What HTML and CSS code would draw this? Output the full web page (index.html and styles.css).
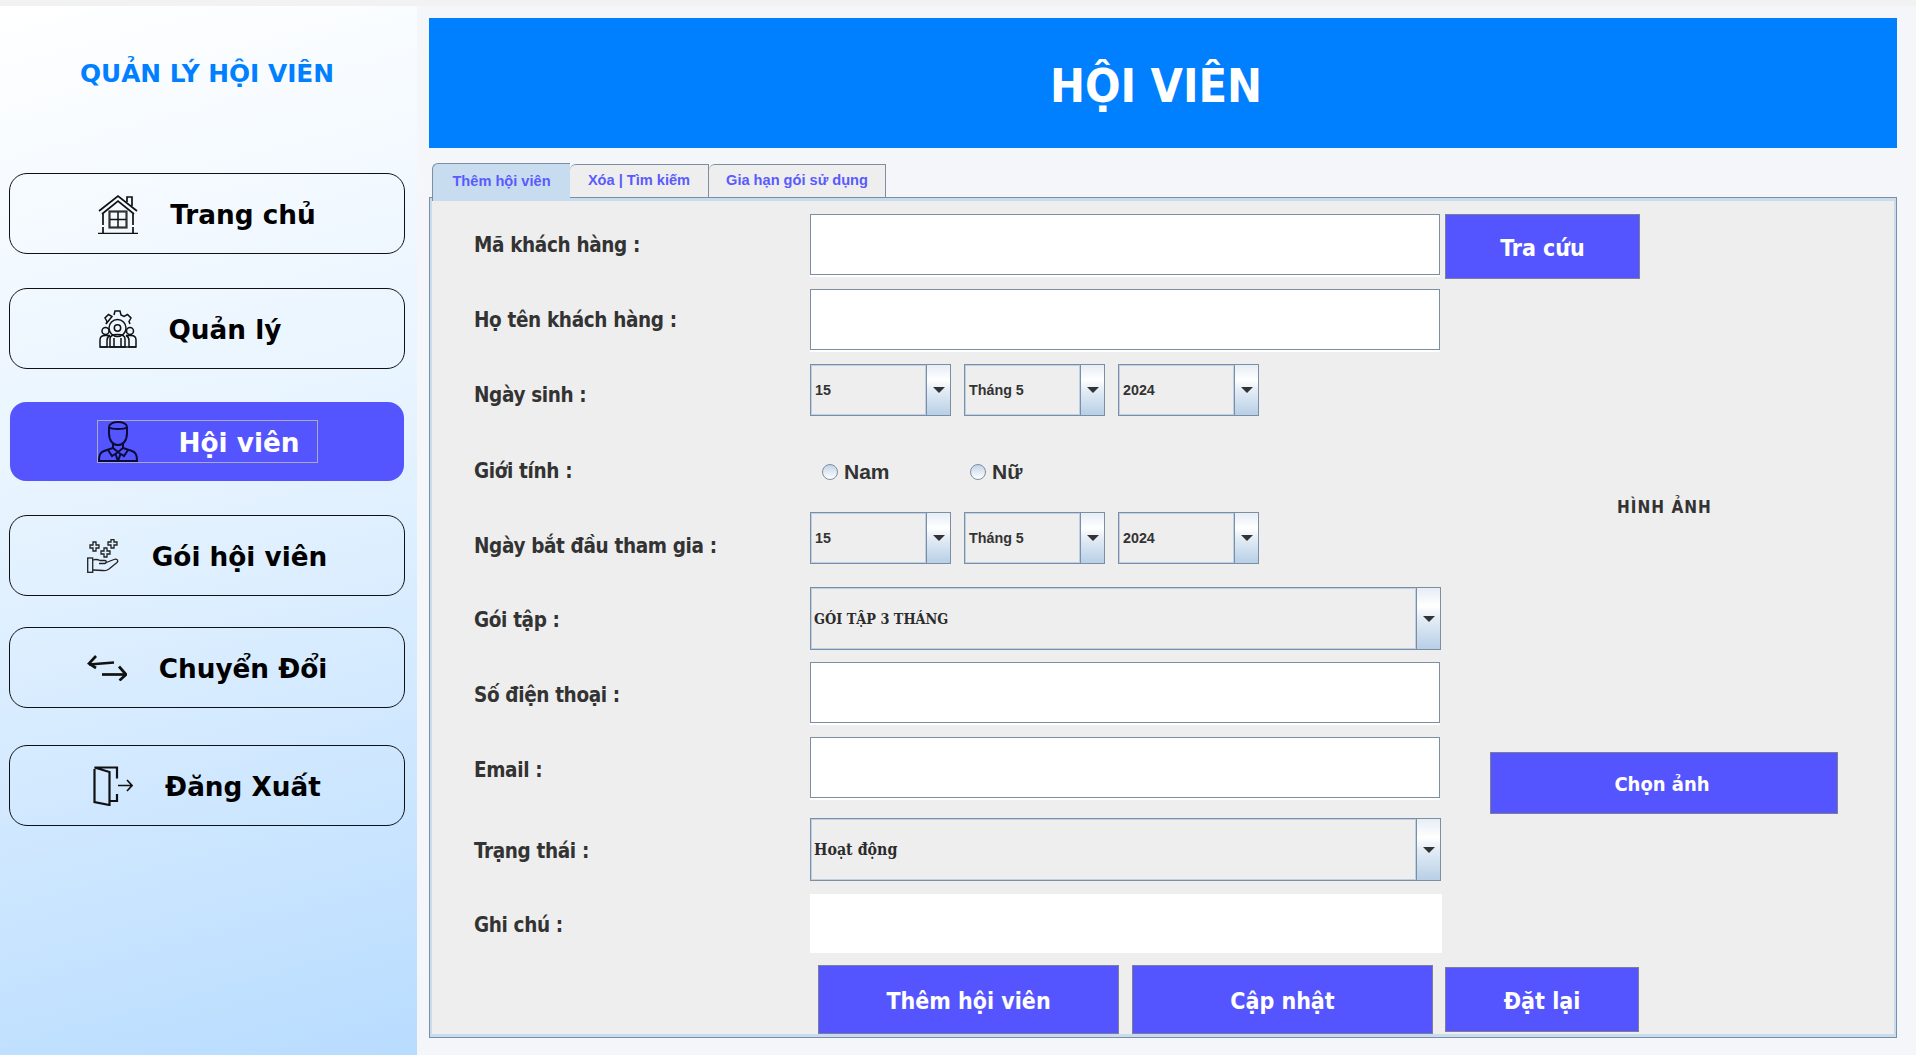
FILE: index.html
```html
<!DOCTYPE html>
<html lang="vi">
<head>
<meta charset="utf-8">
<title>Quản lý hội viên</title>
<link rel="stylesheet" href="styles.css">
</head>
<body>
<div class="app">
  <aside class="sidebar">
    <h2 class="brand">QUẢN LÝ HỘI VIÊN</h2>
    <nav class="nav">
      <a class="nav-btn">
        <svg class="ico" width="40" height="40" viewBox="0 0 40 40"><g fill="none" stroke="#111" stroke-width="1.7"><path d="M1 17 20 2l19 15"/><path d="M4 20 20 7l16 13"/><path d="M29 8V3h5v9"/><path d="M5 20v19M35 20v19" stroke-dasharray="11 2 7"/><path d="M0 39.500h40"/><rect x="11.500" y="17.500" width="17" height="16" stroke="#333" stroke-width="2.200"/><path d="M20 18v15M12 25.500h16" stroke-width="1.500"/></g></svg>
        <span class="nav-label label-trang">Trang chủ</span>
      </a>
      <a class="nav-btn">
        <svg class="ico" width="38" height="38" viewBox="0 0 38 38"><g fill="none" stroke="#111" stroke-width="1.500"><path d="M15 5l1-4h5l1 4 3 1.500 3.500-2 3.500 3.500-2 3.500 1 2.500M7 14l1-2.500-2-3.500 3.500-3.500 3.500 2z"/><circle cx="18.500" cy="18" r="8.500"/><circle cx="18.500" cy="18" r="3.200"/><circle cx="6.500" cy="21" r="3.500"/><circle cx="31" cy="21" r="3.500"/><path d="M1 37v-7c0-3 2-4.500 5-4.500h5c-2 1-3 2.500-3 5V37zM37 37v-7c0-3-2-4.500-5-4.500h-5c2 1 3 2.500 3 5V37zM11 37v-8c0-3 3-4.500 7.500-4.500S26 26 26 29v8z"/><path d="M1 37h36M15 28v9M22 28v9"/></g></svg>
        <span class="nav-label label-quan">Quản lý</span>
      </a>
      <a class="nav-btn nav-active">
        <span class="focus-box">
          <svg class="ico" width="40" height="41" viewBox="0 0 40 41"><g fill="none" stroke="#0b0b3a" stroke-width="2"><path d="M11 13V6c0-3 4-5 9-5s9 2 9 5v7"/><path d="M11 6.500c3 2 15 2 18 0"/><path d="M11 12c0 8 4 12 9 12s9-4 9-12"/><path d="M15 23v4l-9 3c-4 1.500-5 4-5 10h38c0-6-1-8.500-5-10l-9-3v-4"/><path d="M15 27l5 4 5-4M20 31l-2.500 2 2.500 7 2.500-7z"/><path d="M10 29l4 6 3-2M30 29l-4 6-3-2"/></g></svg>
          <span class="nav-label label-hoi">Hội viên</span>
        </span>
      </a>
      <a class="nav-btn">
        <svg class="ico" width="33" height="34" viewBox="0 0 33 34"><g fill="none" stroke="#222" stroke-width="1.300"><path d="M3 6h3V3h3v3h3v3H9v3H6V9H3zM21 3h3V0.700h3V3h3v3h-3v3h-3V6h-3zM14 12h3V9h3v3h3v3h-3v3h-3v-3h-3z"/><rect x="0.700" y="19" width="5" height="14.300"/><path d="M6 21c3-1 5-.5 7 .5h5c1.500 0 2 2.500 0 3h-6M18 24l9-3.500c3-1 5 1 3 3l-8 6.500c-2 1.500-4 2-6 1.500L6 31"/></g></svg>
        <span class="nav-label">Gói hội viên</span>
      </a>
      <a class="nav-btn">
        <svg class="ico" width="40" height="27" viewBox="0 0 40 27"><g fill="none" stroke="#111" stroke-width="2.700"><path d="M2 10.500 27 8.500" stroke-width="2.400"/><path d="M9 2 2 9.500 9 14"/><path d="M15 20.500h24"/><path d="M32 12.500l7 8-6.500 6"/></g></svg>
        <span class="nav-label">Chuyển Đổi</span>
      </a>
      <a class="nav-btn">
        <svg class="ico" width="40" height="40" viewBox="0 0 40 40"><g fill="none" stroke="#111" stroke-width="2.200"><path d="M1.500 3v33l15 3V6L1.500 1.500H24v11M24 28v7h-7"/><path d="M25 19.500h14M34 14l5 5.500-5 5.500" stroke-width="1.700"/></g></svg>
        <span class="nav-label">Đăng Xuất</span>
      </a>
    </nav>
  </aside>

  <main class="main">
    <header class="banner"><h1>HỘI VIÊN</h1></header>
    <div class="tabs">
      <span class="tab tab-on">Thêm hội viên</span>
      <span class="tab">Xóa | Tìm kiếm</span>
      <span class="tab tab-last">Gia hạn gói sử dụng</span>
    </div>
    <section class="panel">
      <form class="form">
        <label class="lbl">Mã khách hàng :</label>
        <input class="field" type="text">
        <button class="btn btn-side" type="button">Tra cứu</button>

        <label class="lbl">Họ tên khách hàng :</label>
        <input class="field field-full-row" type="text">

        <label class="lbl">Ngày sinh :</label>
        <div class="date-row">
          <div class="combo"><span class="combo-val">15</span><span class="combo-arrow"></span></div>
          <div class="combo"><span class="combo-val">Tháng 5</span><span class="combo-arrow"></span></div>
          <div class="combo"><span class="combo-val">2024</span><span class="combo-arrow"></span></div>
        </div>

        <label class="lbl">Giới tính :</label>
        <div class="radio-row">
          <span class="radio-item"><span class="radio"></span>Nam</span>
          <span class="radio-item"><span class="radio"></span>Nữ</span>
        </div>
        <div class="photo-label">HÌNH ẢNH</div>

        <label class="lbl lbl-start">Ngày bắt đầu tham gia :</label>
        <div class="date-row">
          <div class="combo"><span class="combo-val">15</span><span class="combo-arrow"></span></div>
          <div class="combo"><span class="combo-val">Tháng 5</span><span class="combo-arrow"></span></div>
          <div class="combo"><span class="combo-val">2024</span><span class="combo-arrow"></span></div>
        </div>

        <label class="lbl lbl-tall">Gói tập :</label>
        <div class="combo combo-wide"><span class="combo-val val-serif">GÓI TẬP 3 THÁNG</span><span class="combo-arrow"></span></div>

        <label class="lbl lbl-tall">Số điện thoại :</label>
        <input class="field" type="text">

        <label class="lbl lbl-tall">Email :</label>
        <input class="field" type="text">
        <button class="btn btn-photo" type="button">Chọn ảnh</button>

        <label class="lbl lbl-tall">Trạng thái :</label>
        <div class="combo combo-wide"><span class="combo-val val-serif val-status">Hoạt động</span><span class="combo-arrow"></span></div>

        <label class="lbl">Ghi chú :</label>
        <div class="note"></div>

        <div class="actions">
          <button class="btn btn-action" type="button">Thêm hội viên</button>
          <button class="btn btn-action" type="button">Cập nhật</button>
        </div>
        <button class="btn btn-reset" type="button">Đặt lại</button>
      </form>
    </section>
  </main>
</div>
</body>
</html>
```
FILE: styles.css
```css
* { box-sizing: border-box; }
html, body { margin: 0; height: 100%; }
body {
  background: #f4f6f9;
  border-top: 6px solid #f2f2f2;
  overflow: hidden;
  font-family: "DejaVu Sans", sans-serif;
  font-stretch: condensed;
}
.app { display: flex; height: 1049px; }

/* sidebar */
.sidebar {
  width: 417px;
  flex: none;
  background: linear-gradient(165deg, #ffffff 0%, #e6f3ff 45%, #b8dcff 100%);
  padding: 0 9px;
}
.brand {
  margin: 0;
  height: 167px;
  padding: 51px 3px 0 0;
  text-align: center;
  color: #0080ff;
  font-size: 24.800px;
  font-stretch: normal;
  line-height: 34px;
  font-weight: 700;
}
.nav {
  display: grid;
  grid-template-rows: 115px 114px 113px 112px 118px 81px;
  width: 396px;
}
.nav-btn {
  display: flex;
  align-items: center;
  justify-content: center;
  gap: 32px;
  height: 81px;
  border: 1.500px solid #111;
  border-radius: 18px;
  color: #000;
}
.nav-label {
  font-size: 26.300px;
  font-stretch: normal;
  font-weight: 700;
  line-height: 34px;
  padding-top: 2px;
  white-space: nowrap;
}
.label-trang { min-width: 145px; }
.label-quan { min-width: 147px; }
.ico { flex: none; display: block; }
.nav-active {
  margin: 0 1px;
  height: 79px;
  background: #5555ff;
  border: 0;
  border-radius: 16px;
}
.focus-box {
  display: flex;
  align-items: center;
  width: 221px;
  height: 43px;
  border: 1px solid #a8a8c8;
}
.label-hoi { color: #fff; margin-left: 41px; }

/* main */
.main { flex: 1; padding: 12px 19px 0 12px; }
.banner {
  height: 130px;
  padding: 6px 14px 0 0;
  background: #0080ff;
  display: flex;
  align-items: center;
  justify-content: center;
}
.banner h1 {
  margin: 0;
  color: #fff;
  font-size: 46.500px;
  font-weight: 700;
  line-height: 54px;
}
.tabs {
  display: flex;
  height: 34px;
  margin: 15px 0 0 3px;
  position: relative;
  font-family: "Liberation Sans", sans-serif;
}
.tab {
  width: 139px;
  height: 33px;
  margin-top: 1px;
  padding-bottom: 2px;
  background: #eeeeee;
  border: 1px solid #7d8ea3;
  border-bottom: 0;
  border-left: 0;
  border-top-left-radius: 6px;
  display: flex;
  align-items: center;
  justify-content: center;
  color: #5a5aff;
  font-size: 14.600px;
  font-weight: 700;
}
.tab-on {
  width: 138px;
  height: 38px;
  margin-top: 0;
  background: #c8dcf0;
  border-left: 1px solid #7d8ea3;
  border-right: 0;
  padding-bottom: 4px;
  position: relative;
  z-index: 1;
}
.tab-last { width: 177px; }
.panel {
  height: 841px;
  background: #eeeeee;
  border: 1px solid #7d8ea3;
  box-shadow: inset 2px 3px 0 #c8dcf0, inset -2px 0 0 #c8dcf0, inset 0 -3px 0 #c8dcf0;
  padding: 16px 0 0 44px;
}

/* form grid */
.form {
  display: grid;
  grid-template-columns: 336px 635px 1fr;
  grid-template-rows: 75px 75px 76px 72px 75px 75px 75px 81px 76px 71px 73px;
  align-items: start;
}
.lbl {
  grid-column: 1;
  display: flex;
  align-items: center;
  height: 62px;
  color: #333;
  font-size: 20.500px;
  letter-spacing: -0.350px;
  font-weight: 700;
  white-space: nowrap;
}
.lbl-tall { height: 66px; }
.lbl-start { height: 68px; }
.field {
  grid-column: 2;
  display: block;
  width: 630px;
  height: 61px;
  padding: 0;
  background: #fff;
  border: 1px solid #7d8ea3;
  border-radius: 0;
  box-shadow: 0 2px 0 #fff;
  outline: 0;
}
.date-row { grid-column: 2; display: flex; gap: 13px; }
.combo {
  display: flex;
  width: 141px;
  height: 52px;
  border: 1px solid #7d8ea3;
  background: #eeeeee;
}
.combo-val {
  flex: 1;
  display: flex;
  align-items: center;
  padding-left: 3px;
  border: 1px solid #bcd0e6;
  color: #333;
  font-family: "Liberation Sans", sans-serif;
  font-size: 14.300px;
  font-weight: 700;
}
.combo-arrow {
  flex: none;
  width: 24px;
  border-left: 1px solid #7d8ea3;
  background: linear-gradient(#e6edf5 0%, #ffffff 30%, #e4edf6 50%, #b8cfe6 100%);
  display: flex;
  align-items: center;
  justify-content: center;
}
.combo-arrow::after {
  content: "";
  border-left: 6px solid transparent;
  border-right: 6px solid transparent;
  border-top: 6px solid #333;
}
.combo-wide { grid-column: 2; width: 631px; height: 63px; }
.val-serif {
  padding-left: 2px;
  font-family: "DejaVu Serif", serif;
  font-size: 14.300px;
  font-stretch: condensed;
  color: #2b2b2b;
}
.val-status { font-size: 15.800px; }
.radio-row {
  grid-column: 2;
  display: flex;
  align-items: center;
  height: 64px;
  padding-left: 12px;
  color: #333;
  font-family: "Liberation Sans", sans-serif;
  font-size: 21px;
  font-weight: 700;
}
.radio-item { display: flex; align-items: center; gap: 6px; width: 148px; }
.radio {
  width: 16px;
  height: 16px;
  border-radius: 50%;
  border: 1px solid #7d8ea3;
  background: linear-gradient(#c2d4e8, #ffffff);
}
.note { grid-column: 2; width: 632px; height: 59px; background: #fff; }

.btn {
  display: block;
  padding: 2px 0 0;
  background: #5555ff;
  border: 1px solid #7d7d9a;
  border-radius: 0;
  color: #fff;
  font-family: inherit;
  font-stretch: condensed;
  font-size: 23px;
  font-weight: 700;
}
.btn-side { grid-column: 3; width: 195px; height: 65px; padding-top: 3px; }
.photo-label {
  grid-column: 3;
  grid-row: 4 / span 2;
  align-self: center;
  margin: 0 0 13px 172px;
  color: #333;
  font-size: 17px;
  font-weight: 700;
  letter-spacing: 1px;
  white-space: nowrap;
}
.btn-photo { grid-column: 3; grid-row: 8; width: 348px; height: 62px; margin: 15px 0 0 45px; padding-right: 4px; font-size: 20px; }
.actions { grid-column: 1 / span 2; grid-row: 11; display: flex; gap: 13px; padding-left: 344px; }
.btn-action { width: 301px; height: 69px; }
.btn-reset { grid-column: 3; grid-row: 11; width: 194px; height: 65px; margin-top: 2px; }
```
